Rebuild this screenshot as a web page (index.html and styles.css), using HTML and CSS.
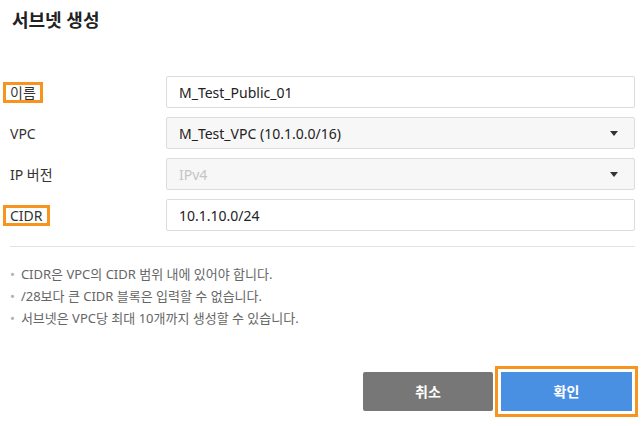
FILE: index.html
```html
<!doctype html>
<html>
    <head>
        <meta charset="utf-8">
        <link rel="stylesheet" href="styles.css">
    </head>
    <body>
        <div class="dialog">
            <h1 class="title">서브넷 생성</h1>
            <div class="form">
                <div class="row">
                    <div class="label"><span class="mark">이름</span></div>
                    <div class="field">M_Test_Public_01</div>
                </div>
                <div class="row">
                    <div class="label">VPC</div>
                    <div class="field select">
                        <span>M_Test_VPC (10.1.0.0/16)</span>
                        <i class="caret"></i>
                    </div>
                </div>
                <div class="row">
                    <div class="label">IP 버전</div>
                    <div class="field select disabled">
                        <span>IPv4</span>
                        <i class="caret"></i>
                    </div>
                </div>
                <div class="row">
                    <div class="label"><span class="mark">CIDR</span></div>
                    <div class="field">10.1.10.0/24</div>
                </div>
            </div>
            <ul class="notes">
                <li>CIDR은 VPC의 CIDR 범위 내에 있어야 합니다.</li>
                <li>/28보다 큰 CIDR 블록은 입력할 수 없습니다.</li>
                <li>서브넷은 VPC당 최대 10개까지 생성할 수 있습니다.</li>
            </ul>
            <div class="buttons">
                <div class="btn cancel">취소</div>
                <div class="btn ok">확인</div>
            </div>
        </div>
    </body>
</html>
```

FILE: styles.css
```css
body {
    margin: 0;
    background: #fff;
    font-family: "Noto Sans", "Noto Sans CJK KR", sans-serif;
    color: #333;
}
.dialog {
    padding: 0 8px 14px 10px;
}
.title {
    margin: 0;
    padding: 8px 0 0 2px;
    height: 32px;
    font-size: 18px;
    line-height: 24px;
    font-weight: bold;
    color: #222;
}
.form {
    display: flex;
    flex-direction: column;
    gap: 9px;
    margin-top: 36px;
    padding-bottom: 15px;
    border-bottom: 1px solid #e3e3e3;
}
.row {
    display: flex;
    align-items: center;
}
.label {
    width: 156px;
    font-size: 14px;
    color: #333;
}
.mark {
    display: inline-block;
    margin-left: -7px;
    padding: 0 4px;
    line-height: 15px;
    border: 3px solid #f7941d;
}
.field {
    flex: 1;
    height: 32px;
    box-sizing: border-box;
    border: 1px solid #dcdcdc;
    border-radius: 2px;
    padding: 0 12px;
    display: flex;
    align-items: center;
    justify-content: space-between;
    font-size: 14px;
    color: #222;
    background: #fff;
}
.select {
    background: #f7f7f7;
}
.disabled {
    color: #c4c4c4;
}
.caret {
    width: 0;
    height: 0;
    margin-right: 4px;
    border-left: 4px solid transparent;
    border-right: 4px solid transparent;
    border-top: 5px solid #333;
}
.notes {
    list-style: none;
    margin: 16px 0 0;
    padding: 0;
    font-size: 13px;
    line-height: 22px;
    color: #666;
}
.notes li::before {
    content: "•";
    color: #b0b0b0;
    margin-right: 6px;
}
.buttons {
    display: flex;
    justify-content: flex-end;
    gap: 8px;
    margin-top: 43px;
    padding-right: 3px;
}
.btn {
    width: 130px;
    height: 39px;
    line-height: 39px;
    text-align: center;
    color: #fff;
    font-size: 14px;
    font-weight: bold;
}
.cancel {
    background: #777;
    border-radius: 2px;
}
/* 강조 표시 */
.ok {
    width: 131px;
    background: #4a90e2;
    box-shadow: 0 0 0 3px #fff, 0 0 0 6px #f7941d;
}
```
